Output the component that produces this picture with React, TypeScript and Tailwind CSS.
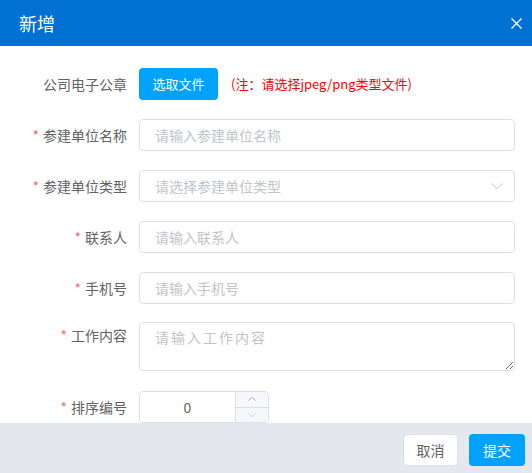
const font = { fontFamily: '"Noto Sans CJK SC", "Noto Sans", sans-serif' };

function Label({ text, required }: { text: string; required?: boolean }) {
  return (
    <div className="w-[127px] shrink-0 pr-0 text-right text-[14px] text-[#606266]">
      {required && <span className="mr-[4px] text-[#f56c6c]">*</span>}
      {text}
    </div>
  );
}

function TextInput({ placeholder }: { placeholder: string }) {
  return (
    <div className="flex h-8 flex-1 items-center rounded-[4px] border border-[#dcdfe6] bg-white px-[15px] text-[14px] text-[#c0c4cc]">
      {placeholder}
    </div>
  );
}

function Chevron({ up, className }: { up?: boolean; className?: string }) {
  return (
    <svg className={className} viewBox="0 0 12 6" fill="none" stroke="currentColor" strokeWidth="1">
      {up ? <path d="M0.5 5.5L6 0.5L11.5 5.5" /> : <path d="M0.5 0.5L6 5.5L11.5 0.5" />}
    </svg>
  );
}

export default function App() {
  return (
    <div className="flex h-[473px] w-[532px] flex-col overflow-hidden bg-white" style={font}>
      <div className="flex h-[46px] shrink-0 items-center justify-between bg-[#0070d3] pl-[19px] pr-[10px]">
        <span className="text-[18px] leading-none text-white">新增</span>
        <svg className="h-[11px] w-[11px] text-white" viewBox="0 0 11 11" stroke="currentColor" strokeWidth="1.4">
          <path d="M0.5 0.5L10.5 10.5M10.5 0.5L0.5 10.5" />
        </svg>
      </div>

      <div className="flex-1 overflow-hidden pt-[22px] pr-[17px]">
        <div className="mb-[19px] flex h-8 items-center">
          <Label text="公司电子公章" />
          <button className="ml-[12px] h-8 w-[79px] rounded-[4px] bg-[#00a2ff] text-[13px] text-white">
            选取文件
          </button>
          <span className="ml-[13px] text-[13px] text-[#ff0000]">(注：请选择jpeg/png类型文件)</span>
        </div>

        <div className="mb-[19px] flex items-center">
          <Label text="参建单位名称" required />
          <div className="ml-[12px] flex flex-1">
            <TextInput placeholder="请输入参建单位名称" />
          </div>
        </div>

        <div className="mb-[19px] flex items-center">
          <Label text="参建单位类型" required />
          <div className="ml-[12px] flex h-8 flex-1 items-center justify-between rounded-[4px] border border-[#dcdfe6] bg-white pl-[15px] pr-[11px] text-[14px] text-[#c0c4cc]">
            <span>请选择参建单位类型</span>
            <Chevron className="h-[6px] w-[12px] text-[#c0c4cc]" />
          </div>
        </div>

        <div className="mb-[19px] flex items-center">
          <Label text="联系人" required />
          <div className="ml-[12px] flex flex-1">
            <TextInput placeholder="请输入联系人" />
          </div>
        </div>

        <div className="mb-[18px] flex items-center">
          <Label text="手机号" required />
          <div className="ml-[12px] flex flex-1">
            <TextInput placeholder="请输入手机号" />
          </div>
        </div>

        <div className="mb-[20px] flex items-start">
          <div className="pt-[3px]">
            <Label text="工作内容" required />
          </div>
          <textarea
            className="ml-[12px] h-[49px] flex-1 resize-y rounded-[4px] border border-[#dcdfe6] px-[15px] py-[4px] text-[14px] tracking-[2px] text-[#606266] placeholder:text-[#c0c4cc] outline-none"
            style={font}
            placeholder="请输入工作内容"
          />
        </div>

        <div className="flex items-center">
          <Label text="排序编号" required />
          <div className="ml-[12px] flex h-8 w-[130px] overflow-hidden rounded-[4px] border border-[#dcdfe6]">
            <div className="flex flex-1 items-center justify-center text-[14px] text-[#606266]">0</div>
            <div className="flex w-[33px] flex-col border-l border-[#dcdfe6] bg-[#f5f7fa]">
              <div className="flex flex-1 items-center justify-center border-b border-[#dcdfe6]">
                <Chevron up className="h-[4px] w-[8px] text-[#909399]" />
              </div>
              <div className="flex flex-1 items-center justify-center">
                <Chevron className="h-[4px] w-[8px] text-[#c0c4cc]" />
              </div>
            </div>
          </div>
        </div>
      </div>

      <div className="flex h-[50px] shrink-0 items-start justify-end gap-[11px] bg-[#e4e7ed] pt-[11px] pr-[7px]">
        <button className="h-8 w-[55px] rounded-[4px] border border-[#dcdfe6] bg-white text-[14px] text-[#606266]">
          取消
        </button>
        <button className="h-8 w-[56px] rounded-[4px] bg-[#00a2ff] text-[14px] text-white">提交</button>
      </div>
    </div>
  );
}
